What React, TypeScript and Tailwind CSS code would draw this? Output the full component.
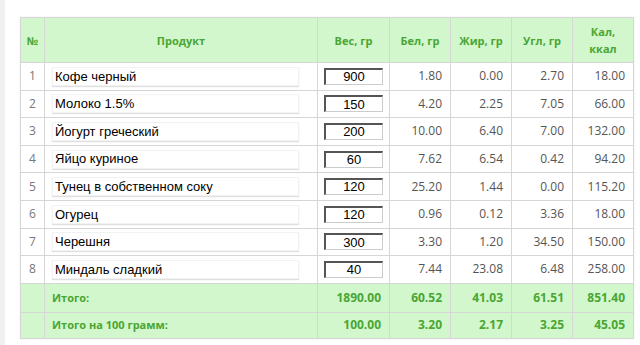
import React from "react";

const rows = [
  ["Кофе черный", "900", "1.80", "0.00", "2.70", "18.00"],
  ["Молоко 1.5%", "150", "4.20", "2.25", "7.05", "66.00"],
  ["Йогурт греческий", "200", "10.00", "6.40", "7.00", "132.00"],
  ["Яйцо куриное", "60", "7.62", "6.54", "0.42", "94.20"],
  ["Тунец в собственном соку", "120", "25.20", "1.44", "0.00", "115.20"],
  ["Огурец", "120", "0.96", "0.12", "3.36", "18.00"],
  ["Черешня", "300", "3.30", "1.20", "34.50", "150.00"],
  ["Миндаль сладкий", "40", "7.44", "23.08", "6.48", "258.00"],
];

const totals = [
  ["Итого:", "1890.00", "60.52", "41.03", "61.51", "851.40"],
  ["Итого на 100 грамм:", "100.00", "3.20", "2.17", "3.25", "45.05"],
];

const numFont = { fontFamily: '"Open Sans", "DejaVu Sans", sans-serif' };

export default function App() {
  return (
    <div className="w-[640px] h-[345px] bg-white flex overflow-hidden">
      <div className="w-[5px] bg-[#f0f0f0]" />
      <div className="pl-[15px] pt-[17px]">
        <table
          className="table-fixed border-collapse w-[613px] border border-[#d6d6d6] shadow-[0_0_2px_rgba(0,0,0,0.08)]"
          style={numFont}
        >
          <colgroup>
            <col className="w-[24px]" />
            <col className="w-[273px]" />
            <col className="w-[72px]" />
            <col className="w-[61px]" />
            <col className="w-[61px]" />
            <col className="w-[61px]" />
            <col className="w-[61px]" />
          </colgroup>
          <thead>
            <tr className="h-[45px] bg-[#d3f7cd] text-[#49a633] text-[11px] font-bold leading-[17px]">
              <th className="border border-[#d6d6d6] text-center">№</th>
              <th className="border border-[#d6d6d6] text-center">Продукт</th>
              <th className="border border-[#d6d6d6] text-center">Вес, гр</th>
              <th className="border border-[#d6d6d6] text-center">Бел, гр</th>
              <th className="border border-[#d6d6d6] text-center">Жир, гр</th>
              <th className="border border-[#d6d6d6] text-center">Угл, гр</th>
              <th className="border border-[#d6d6d6] text-center px-[12px]">Кал, ккал</th>
            </tr>
          </thead>
          <tbody>
            {rows.map((r, i) => (
              <tr key={i} className="h-[27.6px] text-[12px] text-[#555]">
                <td className="border border-[#d6d6d6] text-center text-[#777]">{i + 1}</td>
                <td className="border border-[#d6d6d6] pl-[7px] pr-[18px]">
                  <div
                    className="h-[19px] flex items-center pl-[2px] text-[13px] text-black shadow-[0_1px_1px_rgba(0,0,0,0.12)] border border-[#f2f2f2]"
                    style={{ fontFamily: '"Liberation Sans", Arial, sans-serif' }}
                  >
                    {r[0]}
                  </div>
                </td>
                <td className="border border-[#d6d6d6] pl-[6px] pr-[6px]">
                  <div
                    className="w-[59px] h-[17px] flex items-center justify-center text-[13px] text-black bg-white border-t-2 border-l-2 border-b border-r border-t-[#555] border-l-[#555] border-b-[#ccc] border-r-[#ccc]"
                    style={{ fontFamily: '"Liberation Sans", Arial, sans-serif' }}
                  >
                    {r[1]}
                  </div>
                </td>
                {r.slice(2).map((v, j) => (
                  <td key={j} className="border border-[#d6d6d6] text-right pr-[8px]">
                    {v}
                  </td>
                ))}
              </tr>
            ))}
            {totals.map((r, i) => (
              <tr
                key={i}
                className={`${i === 0 ? "h-[29px]" : "h-[26px]"} bg-[#d3f7cd] text-[#49a633] font-bold`}
              >
                <td className="border border-[#d6d6d6]" />
                <td className="border border-[#d6d6d6] pl-[7px] text-[11px]">{r[0]}</td>
                {r.slice(1).map((v, j) => (
                  <td key={j} className="border border-[#d6d6d6] text-right pr-[8px] text-[12px]">
                    {v}
                  </td>
                ))}
              </tr>
            ))}
          </tbody>
        </table>
      </div>
    </div>
  );
}
